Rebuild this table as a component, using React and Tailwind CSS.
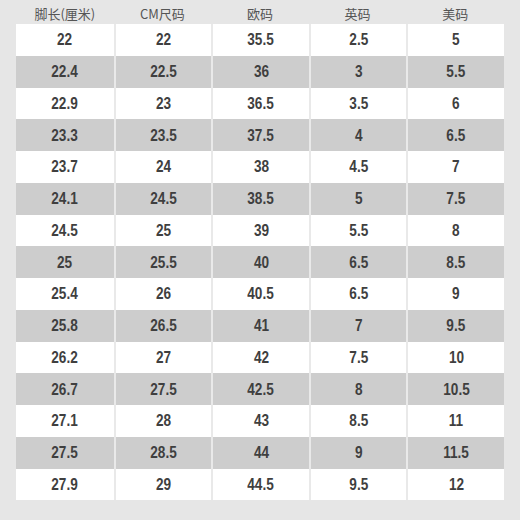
import React from 'react';

const headers = ['脚长(厘米)', 'CM尺码', '欧码', '英码', '美码'];

const rows = [
  ['22', '22', '35.5', '2.5', '5'],
  ['22.4', '22.5', '36', '3', '5.5'],
  ['22.9', '23', '36.5', '3.5', '6'],
  ['23.3', '23.5', '37.5', '4', '6.5'],
  ['23.7', '24', '38', '4.5', '7'],
  ['24.1', '24.5', '38.5', '5', '7.5'],
  ['24.5', '25', '39', '5.5', '8'],
  ['25', '25.5', '40', '6.5', '8.5'],
  ['25.4', '26', '40.5', '6.5', '9'],
  ['25.8', '26.5', '41', '7', '9.5'],
  ['26.2', '27', '42', '7.5', '10'],
  ['26.7', '27.5', '42.5', '8', '10.5'],
  ['27.1', '28', '43', '8.5', '11'],
  ['27.5', '28.5', '44', '9', '11.5'],
  ['27.9', '29', '44.5', '9.5', '12'],
];

const App = () => {
  return (
    <div className="w-[520px] h-[520px] bg-[#e6e6e6] px-4 overflow-hidden">
      <div className="grid grid-cols-5 h-6 items-center text-[13px] text-[#555] font-['Noto_Sans_CJK_SC',sans-serif]">
        {headers.map((h) => (
          <div key={h} className="text-center leading-none pt-[3px]">{h}</div>
        ))}
      </div>
      <div className="flex flex-col">
        {rows.map((row, i) => (
          <div
            key={i}
            className={`grid grid-cols-5 h-[31.75px] ${i % 2 === 1 ? 'bg-[#cdcdcd]' : 'bg-white'}`}
          >
            {row.map((cell, j) => (
              <div
                key={j}
                className={`flex items-center justify-center ${j > 0 ? 'border-l-2 border-[#e9e9e9]' : ''}`}
              >
                <span className="inline-block scale-x-[0.8] text-[17px] font-bold text-[#3f3f3f] font-['Liberation_Sans',sans-serif] leading-none">
                  {cell}
                </span>
              </div>
            ))}
          </div>
        ))}
      </div>
    </div>
  );
};

export default App;
